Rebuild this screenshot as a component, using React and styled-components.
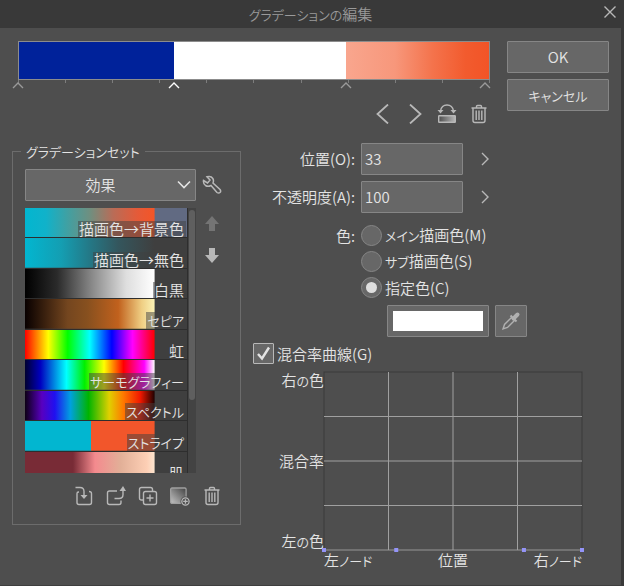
import React, { useState } from 'react';
import styled, { createGlobalStyle } from 'styled-components';

const GlobalStyle = createGlobalStyle`
  * {
    box-sizing: border-box;
  }
  body {
    margin: 0;
    background: #2e2e2e;
    color: #e4e4e4;
    font-family: 'Noto Sans CJK JP', 'Noto Sans', sans-serif;
    font-size: 15px;
    font-weight: 350;
    line-height: 16px;
    font-feature-settings: 'palt';
  }
  button, input, select {
    font: inherit;
    font-feature-settings: inherit;
    color: inherit;
  }
`;

const Dialog = styled.div`
  display: flex;
  flex-direction: column;
  min-height: 100vh;
  background: #4e4e4e;
  border-right: 3px solid #393939;
  border-bottom: 1px solid #3e3e3e;
`;

const TitleBar = styled.header`
  display: grid;
  grid-template-columns: 24px 1fr 24px;
  align-items: center;
  justify-items: end;
  height: 28px;
  background: #393939;
  color: #9a9a9a;
`;

const Title = styled.h1`
  grid-column: 2;
  justify-self: center;
  margin: 0;
  font-size: 15px;
  font-weight: inherit;
`;

const Kana = styled.span`
  font-size: 13px;
`;

const IconButton = styled.button`
  display: flex;
  align-items: center;
  justify-content: center;
  width: 20px;
  height: 20px;
  padding: 0;
  border: 0;
  background: none;
  color: ${props => (props.$dim ? '#747474' : '#b8b8b8')};
`;

const RampSection = styled.section`
  display: flex;
  gap: 17px;
  padding: 13px 12px 0 18px;
`;

const RampEditor = styled.div`
  flex: 1;
`;

const Ramp = styled.div`
  height: 39px;
  border: 1px solid #8c8c8c;
  background: linear-gradient(
    to right,
    #00229a 33%,
    #ffffff 33%,
    #ffffff 69.5%,
    #f9a68e 69.5%,
    #f7977b 80%,
    #f4734c 88%,
    #f25b2e 95%,
    #f25427
  );
`;

const Ticks = styled.div`
  display: grid;
  grid-template-columns: repeat(10, 1fr);
  height: 3px;
  border-right: 1px solid #7d7d7d;
`;

const Tick = styled.span`
  border-left: 1px solid #7d7d7d;
`;

const Markers = styled.div`
  position: relative;
  height: 21px;
`;

const Marker = styled.button`
  position: absolute;
  top: -2px;
  width: 12px;
  height: 8px;
  margin-left: -6px;
  padding: 0;
  border: 0;
  background: none;
  color: ${props => (props.$active ? '#ffffff' : '#9a9a9a')};
  svg {
    display: block;
  }
`;

const RampTools = styled.div`
  display: flex;
  justify-content: flex-end;
  gap: 12px;
  padding-right: 1px;
`;

const Actions = styled.div`
  display: flex;
  flex-direction: column;
  gap: 6px;
  width: 102px;
`;

const Button = styled.button`
  height: 32px;
  padding: 0;
  border: 1px solid #868686;
  border-radius: 1px;
  background: #676767;
`;

const Content = styled.main`
  display: flex;
  align-items: flex-start;
  gap: 12px;
  padding: 19px 39px 0 12px;
`;

const SetPanel = styled.fieldset`
  flex: 0 0 229px;
  margin: 0;
  padding: 9px 12px 18px;
  border: 1px solid #6c6c6c;
`;

const Legend = styled.legend`
  margin-left: -4px;
  padding: 0 5px;
`;

const SetGrid = styled.div`
  display: grid;
  grid-template-columns: 171px 20px;
  gap: 7px 6px;
  align-items: center;
`;

const SelectBox = styled.div`
  display: grid;
  grid-template-columns: 1fr 20px;
  align-items: center;
  svg {
    grid-area: 1 / 2;
    pointer-events: none;
  }
`;

const Select = styled.select`
  grid-area: 1 / 1 / 2 / 3;
  height: 32px;
  padding: 0 20px 0 0;
  border: 1px solid #868686;
  border-radius: 1px;
  background: #676767;
  appearance: none;
  text-align: center;
  text-align-last: center;
`;

const ListBox = styled.div`
  display: flex;
  height: 265px;
  overflow: hidden;
  background: #434343;
`;

const GradientList = styled.ul`
  flex: 1;
  display: grid;
  grid-template-rows: repeat(9, 1fr);
  height: 274px;
  margin: 0;
  padding: 0;
  list-style: none;
  border-right: 1px solid #2e2e2e;
`;

const GradientItem = styled.li`
  display: flex;
  align-items: flex-end;
  justify-content: flex-end;
  padding-right: 1px;
  border-bottom: 1px solid #2e2e2e;
  background: ${props => props.$fill} left / 80% 100% no-repeat,
    ${props => (props.$selected ? '#616a82' : '#3f3f3f')};
`;

const GradientName = styled.span`
  padding: 0 2px 0 1px;
  background: rgba(64, 64, 64, 0.5);
`;

const ScrollTrack = styled.div`
  width: 8px;
  padding: 2px 1px;
`;

const ScrollThumb = styled.div`
  height: 190px;
  border-radius: 3px;
  background: #5f5f5f;
`;

const MoveButtons = styled.div`
  display: flex;
  flex-direction: column;
  align-self: start;
  gap: 12px;
  padding-top: 6px;
`;

const SetTools = styled.div`
  display: flex;
  justify-content: flex-end;
  gap: 12px;
  padding: 13px 6px 0 0;
`;

const Settings = styled.div`
  flex: 1;
`;

const Form = styled.div`
  display: grid;
  grid-template-columns: 102px 1fr;
  gap: 6px;
  align-items: center;
`;

const Label = styled.label`
  text-align: right;
`;

const Line = styled.div`
  display: flex;
  align-items: center;
  gap: 12px;
`;

const NumberInput = styled.input`
  width: 102px;
  height: 32px;
  padding: 0 3px 2px;
  border: 1px solid #868686;
  border-radius: 1px;
  background: #676767;
`;

const ColorGroup = styled.div`
  display: grid;
  grid-template-columns: 102px 1fr;
  column-gap: 6px;
  padding-top: 12px;
`;

const GroupLabel = styled.span`
  line-height: 21px;
  text-align: right;
`;

const Radios = styled.div`
  display: flex;
  flex-direction: column;
  gap: 5px;
`;

const Option = styled.label`
  display: flex;
  align-items: center;
  gap: 3px;
  height: 21px;
`;

const Radio = styled.input`
  display: grid;
  place-content: center;
  width: 21px;
  height: 21px;
  margin: 0;
  border: 1px solid #868686;
  border-radius: 50%;
  background: #676767;
  appearance: none;
  &:checked::before {
    content: '';
    width: 11px;
    height: 11px;
    border-radius: 50%;
    background: #dedede;
  }
`;

const ColorLine = styled.div`
  display: flex;
  gap: 6px;
  padding: 2px 0 0 26px;
`;

const Swatch = styled.button`
  width: 102px;
  height: 32px;
  padding: 5px;
  border: 1px solid #868686;
  border-radius: 1px;
  background: #676767;
`;

const SwatchColor = styled.span`
  display: block;
  height: 20px;
  background: #ffffff;
`;

const PickerButton = styled(Button)`
  display: grid;
  place-content: center;
  width: 32px;
  color: #b0b0b0;
`;

const CurveToggle = styled(Option)`
  margin-top: 6px;
`;

const CheckField = styled.span`
  display: grid;
  place-items: center;
  svg {
    grid-area: 1 / 1;
    pointer-events: none;
  }
`;

const Checkbox = styled.input`
  grid-area: 1 / 1;
  width: 21px;
  height: 21px;
  margin: 0;
  border: 1px solid #b8b8b8;
  border-radius: 1px;
  background: #676767;
  appearance: none;
`;

const Curve = styled.div`
  display: grid;
  grid-template-columns: 71px 1fr;
  padding-top: 8px;
`;

const AxisY = styled.div`
  display: flex;
  flex-direction: column;
  justify-content: space-between;
  text-align: right;
`;

const AxisX = styled.div`
  grid-column: 2;
  display: flex;
  justify-content: space-between;
  padding-top: 2px;
`;

const Plot = styled.svg`
  display: block;
  width: 100%;
  height: 178px;
  overflow: visible;
`;

const stops = [
  { at: 0 },
  { at: 33, active: true },
  { at: 69.5 },
  { at: 99 },
];

const gradients = [
  {
    name: '描画色→背景色',
    fill: 'linear-gradient(to right, #02b6d0, #10b2ca 16%, #41a0a2 33%, #6f8f80 50%, #b96c57 68%, #e55a38 87%, #f45527)',
    selected: true,
  },
  {
    name: '描画色→無色',
    fill: 'linear-gradient(to right, #02b6d0, #149eb2 28%, #247886 50%, #34565d 72%, #3f3f3f)',
  },
  {
    name: '白黒',
    fill: 'linear-gradient(to right, #000, #2b2b2b 25%, #8a8a8a 52%, #dedede 78%, #fff)',
  },
  {
    name: 'セピア',
    fill: 'linear-gradient(to right, #080000, #74461f 33%, #87501f 48%, #c1611d 72%, #efce83 90%, #fbf3b6)',
  },
  {
    name: '虹',
    fill: 'linear-gradient(to right, #f00, #ff0 18%, #0f0 33%, #0ff 50%, #00f 67%, #f0f 83%, #f00)',
  },
  {
    name: 'サーモグラフィー',
    fill: 'linear-gradient(to right, #000030, #0000c0 12%, #00ffff 32%, #00f000 46%, #ffff00 61%, #ff0000 76%, #ff00ff 92%, #fff)',
  },
  {
    name: 'スペクトル',
    fill: 'linear-gradient(to right, #0c0014, #5800c0 13%, #2010f0 23%, #00a0e0 35%, #00b400 49%, #e0d000 65%, #ff7800 76%, #f01800 89%, #200000)',
  },
  {
    name: 'ストライプ',
    fill: 'linear-gradient(to right, #02b6d0 51%, #f2562b 51%)',
  },
  {
    name: '肌',
    fill: 'linear-gradient(to right, #782b36 37%, #f48a8e 54%, #e2b098 74%, #fdcfb5 94%, #fde5cf)',
  },
];

const colorModes = [
  { id: 'main', label: 'メイン描画色(M)' },
  { id: 'sub', label: 'サブ描画色(S)' },
  { id: 'custom', label: '指定色(C)' },
];

// kana runs are set one step smaller than kanji
function Text({ children }) {
  return (
    <span>
      {children
        .split(/([\u3040-\u30ff]+)/)
        .filter(Boolean)
        .map((part, i) =>
          /[\u3040-\u30ff]/.test(part) ? <Kana key={i}>{part}</Kana> : part
        )}
    </span>
  );
}

function Icon({ width = 20, height = 20, children, stroke = 1.4 }) {
  return (
    <svg
      width={width}
      height={height}
      viewBox={`0 0 ${width} ${height}`}
      fill="none"
      stroke="currentColor"
      strokeWidth={stroke}
      aria-hidden="true"
    >
      {children}
    </svg>
  );
}

function TrashIcon() {
  return (
    <Icon>
      <path d="M2.5 4h15M7.5 4V2.5q0-1 1-1h3q1 0 1 1V4M4 4v12.5q0 2 2 2h8q2 0 2-2V4" />
      <path d="M7.2 6.5v9.5M10 6.5v9.5M12.8 6.5v9.5" />
    </Icon>
  );
}

function ChevronRight() {
  return (
    <Icon>
      <path d="M7 4l6 6-6 6" />
    </Icon>
  );
}

function NumberField({ id, label, value, onChange }) {
  return (
    <>
      <Label htmlFor={id}>{label}</Label>
      <Line>
        <NumberInput
          id={id}
          value={value}
          onChange={e => onChange(e.target.value)}
        />
        <IconButton aria-label="詳細">
          <ChevronRight />
        </IconButton>
      </Line>
    </>
  );
}

function GradientRamp() {
  return (
    <RampEditor>
      <Ramp />
      <Ticks>
        {Array.from({ length: 10 }, (_, i) => (
          <Tick key={i} />
        ))}
      </Ticks>
      <Markers>
        {stops.map(stop => (
          <Marker
            key={stop.at}
            $active={stop.active}
            style={{ left: `${stop.at}%` }}
            aria-label={`${stop.at}%`}
          >
            <Icon width={12} height={8}>
              <path d="M1 7l5-5 5 5" />
            </Icon>
          </Marker>
        ))}
      </Markers>
      <RampTools>
        <IconButton aria-label="前へ">
          <Icon stroke={1.8}>
            <path d="M15 0.5L4.5 10 15 19.5" />
          </Icon>
        </IconButton>
        <IconButton aria-label="次へ">
          <Icon stroke={1.8}>
            <path d="M5 0.5L15.5 10 5 19.5" />
          </Icon>
        </IconButton>
        <IconButton aria-label="反転">
          <Icon>
            <defs>
              <linearGradient id="swapFill">
                <stop offset="0" stopColor="#4e4e4e" />
                <stop offset="1" stopColor="#b8b8b8" />
              </linearGradient>
            </defs>
            <path d="M3.5 7Q4.5 1 10 1T16.5 7" />
            <path d="M0.5 6h6L3.5 9.500zM13.5 6h6L16.500 9.500z" fill="currentColor" stroke="none" />
            <rect x="1.7" y="11.7" width="16.600" height="6.600" rx="0.500" fill="url(#swapFill)" />
          </Icon>
        </IconButton>
        <IconButton aria-label="削除">
          <TrashIcon />
        </IconButton>
      </RampTools>
    </RampEditor>
  );
}

function GradientSet() {
  return (
    <SetPanel>
      <Legend>
        <Text>グラデーションセット</Text>
      </Legend>
      <SetGrid>
        <SelectBox>
          <Select aria-label="グラデーションセット">
            <option>効果</option>
          </Select>
          <Icon width={16} height={10} stroke={1.6}>
            <path d="M2 1.5l6 6 6-6" />
          </Icon>
        </SelectBox>
        <IconButton aria-label="設定">
          <Icon stroke={1.5}>
            <path d="M1.5 5.5L5.5 8 8 5 5 1.8Q9 0.5 10.800 3.500 12 5.500 11 8L18 14.500Q19.300 16.300 18 17.500T15 17.500L9 10.500Q6 12 3.500 10.500 1 8.500 1.500 5.500z" />
          </Icon>
        </IconButton>
        <ListBox>
          <GradientList>
            {gradients.map(item => (
              <GradientItem
                key={item.name}
                $fill={item.fill}
                $selected={item.selected}
              >
                <GradientName>
                  <Text>{item.name}</Text>
                </GradientName>
              </GradientItem>
            ))}
          </GradientList>
          <ScrollTrack>
            <ScrollThumb />
          </ScrollTrack>
        </ListBox>
        <MoveButtons>
          <IconButton aria-label="上へ" $dim>
            <Icon>
              <path d="M10 2l7 8h-4v7H7v-7H3z" fill="currentColor" stroke="none" />
            </Icon>
          </IconButton>
          <IconButton aria-label="下へ">
            <Icon>
              <path d="M10 17l7-8h-4V2H7v7H3z" fill="currentColor" stroke="none" />
            </Icon>
          </IconButton>
        </MoveButtons>
      </SetGrid>
      <SetTools>
        <IconButton aria-label="読み込み">
          <Icon>
            <path d="M1.5 1.5h4.500q4 0 4 4V10M5 6H4.500q-1.500 0-1.500 1.500v9q0 2 2 2h10.500q2 0 2-2v-9q0-2-2.500-2" />
            <path d="M6.500 9h7L10 13z" fill="currentColor" stroke="none" />
          </Icon>
        </IconButton>
        <IconButton aria-label="書き出し">
          <Icon>
            <path d="M11 5H3.500q-2 0-2 2v9.500q0 2 2 2h9.500q2 0 2-2v-2M8.500 12.500h4.500q4 0 4-4V3" />
            <path d="M13.500 5h6.500L17 0z" fill="currentColor" stroke="none" />
          </Icon>
        </IconButton>
        <IconButton aria-label="複製">
          <Icon>
            <path d="M5 14H3.500q-2 0-2-2v-8.500q0-2 2-2h9q2 0 2 2V5M12 8.500v7M8.500 12h7" />
            <rect x="5.500" y="5.500" width="13" height="13" rx="2" />
          </Icon>
        </IconButton>
        <IconButton aria-label="追加">
          <Icon width={22}>
            <defs>
              <linearGradient id="addFill" x1="1" y1="0" x2="0" y2="1">
                <stop offset="0.1" stopColor="#4e4e4e" />
                <stop offset="0.9" stopColor="#b8b8b8" />
              </linearGradient>
            </defs>
            <rect x="0.7" y="1.2" width="17" height="17" rx="1.500" fill="url(#addFill)" stroke="#a0a0a0" />
            <circle cx="17" cy="16" r="4.500" fill="#4e4e4e" stroke="#4e4e4e" strokeWidth="2" />
            <circle cx="17" cy="16" r="4" fill="#4e4e4e" />
            <path d="M17 13.500v5M14.500 16h5" />
          </Icon>
        </IconButton>
        <IconButton aria-label="削除">
          <TrashIcon />
        </IconButton>
      </SetTools>
    </SetPanel>
  );
}

function MixCurve() {
  const lines = ['25%', '50%', '75%'];
  const nodes = ['0%', '28%', '77.5%', '100%'];

  return (
    <Curve>
      <AxisY>
        <Text>右の色</Text>
        <Text>混合率</Text>
        <Text>左の色</Text>
      </AxisY>
      <Plot>
        <rect width="100%" height="100%" fill="none" stroke="#3a3a3a" />
        {lines.map(pos => (
          <g key={pos} stroke="#a0a0a0">
            <line x1={pos} x2={pos} y1="0" y2="100%" />
            <line x1="0" x2="100%" y1={pos} y2={pos} />
          </g>
        ))}
        <line x1="0" x2="100%" y1="100%" y2="100%" stroke="#a0a0a0" />
        {nodes.map(pos => (
          <rect
            key={pos}
            x={pos}
            y="100%"
            width="4"
            height="4"
            transform="translate(-2 -2)"
            fill="#9494f8"
          />
        ))}
      </Plot>
      <AxisX>
        <Text>左ノード</Text>
        <Text>位置</Text>
        <Text>右ノード</Text>
      </AxisX>
    </Curve>
  );
}

function App() {
  const [position, setPosition] = useState('33');
  const [opacity, setOpacity] = useState('100');
  const [mode, setMode] = useState('custom');
  const [curve, setCurve] = useState(true);

  return (
    <>
      <GlobalStyle />
      <Dialog>
        <TitleBar>
          <Title>
            <Text>グラデーションの編集</Text>
          </Title>
          <IconButton aria-label="閉じる">
            <Icon>
              <path d="M3.5 2.5l11 11M14.5 2.5l-11 11" />
            </Icon>
          </IconButton>
        </TitleBar>
        <RampSection>
          <GradientRamp />
          <Actions>
            <Button>OK</Button>
            <Button>
              <Text>キャンセル</Text>
            </Button>
          </Actions>
        </RampSection>
        <Content>
          <GradientSet />
          <Settings>
            <Form>
              <NumberField
                id="position"
                label="位置(O):"
                value={position}
                onChange={setPosition}
              />
              <NumberField
                id="opacity"
                label="不透明度(A):"
                value={opacity}
                onChange={setOpacity}
              />
            </Form>
            <ColorGroup role="radiogroup" aria-labelledby="colorLabel">
              <GroupLabel id="colorLabel">色:</GroupLabel>
              <Radios>
                {colorModes.map(item => (
                  <Option key={item.id}>
                    <Radio
                      type="radio"
                      name="color"
                      checked={mode === item.id}
                      onChange={() => setMode(item.id)}
                    />
                    <Text>{item.label}</Text>
                  </Option>
                ))}
                <ColorLine>
                  <Swatch aria-label="指定色">
                    <SwatchColor />
                  </Swatch>
                  <PickerButton aria-label="スポイト">
                    <Icon>
                      <path d="M2 18l1.500-4.500 7-7 3 3-7 7z" />
                      <path d="M9.500 4.500l6 6" strokeWidth="2" />
                      <path d="M12.500 7.500l4-4" strokeWidth="4" strokeLinecap="round" />
                    </Icon>
                  </PickerButton>
                </ColorLine>
              </Radios>
            </ColorGroup>
            <CurveToggle>
              <CheckField>
                <Checkbox
                  type="checkbox"
                  checked={curve}
                  onChange={() => setCurve(!curve)}
                />
                {curve && (
                  <Icon width={15} height={15} stroke={2.4}>
                    <path d="M2 8l4 4.500 7-11" />
                  </Icon>
                )}
              </CheckField>
              混合率曲線(G)
            </CurveToggle>
            <MixCurve />
          </Settings>
        </Content>
      </Dialog>
    </>
  );
}

export default App;
